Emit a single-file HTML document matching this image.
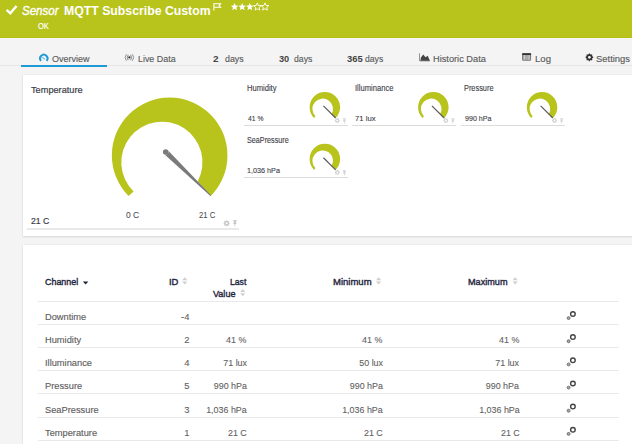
<!DOCTYPE html><html><head><meta charset="utf-8"><style>
html,body{margin:0;padding:0;width:632px;height:444px;overflow:hidden;background:#f4f4f4;font-family:"Liberation Sans",sans-serif;}
.t{position:absolute;white-space:pre;}
.abs{position:absolute;}
svg{position:absolute;left:0;top:0;overflow:visible;}
</style></head><body>
<div class="abs" style="left:0;top:0;width:632px;height:37px;background:#b8c41c"></div>
<div class="abs" style="left:0;top:37px;width:632px;height:1px;background:#b3bf12"></div>
<div class="abs" style="left:0;top:38px;width:632px;height:1px;background:#f7f7f8"></div>
<svg width="632" height="37"><path d="M6.6 9.8 L10.3 13.3 L16.5 6.0" fill="none" stroke="#fff" stroke-width="2.4" stroke-linecap="butt" stroke-linejoin="miter"/></svg>
<svg width="632" height="37"><path d="M213.9 10.4 V3.7 H220.6 L219.1 5.5 L220.6 7.3 H213.9" fill="none" stroke="#fff" stroke-width="1.1"/></svg>
<svg width="632" height="37"><polygon points="234.60,2.90 235.66,5.44 238.40,5.66 236.31,7.46 236.95,10.14 234.60,8.70 232.25,10.14 232.89,7.46 230.80,5.66 233.54,5.44" fill="#fff"/><polygon points="242.20,2.90 243.26,5.44 246.00,5.66 243.91,7.46 244.55,10.14 242.20,8.70 239.85,10.14 240.49,7.46 238.40,5.66 241.14,5.44" fill="#fff"/><polygon points="249.80,2.90 250.86,5.44 253.60,5.66 251.51,7.46 252.15,10.14 249.80,8.70 247.45,10.14 248.09,7.46 246.00,5.66 248.74,5.44" fill="#fff"/><polygon points="257.40,2.90 258.46,5.44 261.20,5.66 259.11,7.46 259.75,10.14 257.40,8.70 255.05,10.14 255.69,7.46 253.60,5.66 256.34,5.44" fill="none" stroke="#fff" stroke-width="0.9"/><polygon points="265.00,2.90 266.06,5.44 268.80,5.66 266.71,7.46 267.35,10.14 265.00,8.70 262.65,10.14 263.29,7.46 261.20,5.66 263.94,5.44" fill="none" stroke="#fff" stroke-width="0.9"/></svg>
<div class="abs" style="left:0;top:65px;width:632px;height:1px;background:#e6e6e6"></div>
<div class="abs" style="left:21px;top:64.6px;width:86px;height:2px;background:#1e9ad6"></div>
<svg width="632" height="70">
<path d="M40.97 60.78 A3.7 3.7 0 1 1 46.63 60.78" fill="none" stroke="#1e9ad6" stroke-width="1.9"/>
<path d="M42.3 57.1 L44.8 59.3" stroke="#5ab4e2" stroke-width="1.1"/>
<circle cx="129.4" cy="57.4" r="1.15" fill="#333"/>
<path d="M128.2 54.8 Q126.2 57.5 128.2 60.2 M130.6 54.8 Q132.6 57.5 130.6 60.2" fill="none" stroke="#777" stroke-width="0.9"/>
<path d="M126.4 54.2 Q123.8 57.5 126.4 60.8 M132.4 54.2 Q135.0 57.5 132.4 60.8" fill="none" stroke="#888" stroke-width="0.9"/>
<path d="M419.5 53.4 V60.9 H430" fill="none" stroke="#888" stroke-width="0.9"/>
<path d="M420.4 60.8 L420.9 57.6 L423.3 54.6 L425.5 57.2 L427.7 55.7 L429.9 60.8 Z" fill="#444"/>
<rect x="522.1" y="53.3" width="9" height="7.5" fill="#777" rx="1"/>
<rect x="522.1" y="53.3" width="9" height="1.8" fill="#333" rx="0.6"/>
<rect x="523.1" y="55.1" width="7" height="4.7" fill="#aaa"/>
<rect x="524.0" y="55.1" width="1" height="4.7" fill="#ccc"/>
<rect x="528.6" y="55.1" width="1" height="4.7" fill="#ccc"/>
<polygon points="592.36,56.58 593.27,56.80 593.27,57.80 592.36,58.02 592.00,58.88 592.49,59.68 591.78,60.39 590.98,59.90 590.12,60.26 589.90,61.17 588.90,61.17 588.68,60.26 587.82,59.90 587.02,60.39 586.31,59.68 586.80,58.88 586.44,58.02 585.53,57.80 585.53,56.80 586.44,56.58 586.80,55.72 586.31,54.92 587.02,54.21 587.82,54.70 588.68,54.34 588.90,53.43 589.90,53.43 590.12,54.34 590.98,54.70 591.78,54.21 592.49,54.92 592.00,55.72" fill="#333"/><circle cx="589.4" cy="57.3" r="2.89" fill="#333"/><circle cx="589.4" cy="57.3" r="1.40" fill="#f4f4f4"/>
</svg>
<div class="abs" style="left:23px;top:75px;width:640px;height:161px;background:#fff;box-shadow:0 0 1.5px rgba(0,0,0,0.10),0 1px 2px rgba(0,0,0,0.10)"></div>
<svg width="632" height="240">
<path d="M128.6 196 A57.8 57.8 0 1 1 210.7 196 L197.8 181.2 A40.6 40.6 0 1 0 133.6 191.4 Z" fill="#b8c41c"/>
<path d="M163.78 153.87 L210.39 195.92 L211.01 195.28 L167.62 149.93 A2.75 2.75 0 0 1 163.78 153.87 Z" fill="#7a7a7a"/><circle cx="165.7" cy="151.9" r="2.75" fill="#7a7a7a"/>
</svg>
<div class="abs" style="left:27px;top:228px;width:212px;height:2px;background:#e9e9e9"></div>
<svg width="632" height="240"><polygon points="228.95,222.73 229.67,222.90 229.67,223.70 228.95,223.87 228.66,224.56 229.06,225.19 228.49,225.76 227.86,225.36 227.17,225.65 227.00,226.37 226.20,226.37 226.03,225.65 225.34,225.36 224.71,225.76 224.14,225.19 224.54,224.56 224.25,223.87 223.53,223.70 223.53,222.90 224.25,222.73 224.54,222.04 224.14,221.41 224.71,220.84 225.34,221.24 226.03,220.95 226.20,220.23 227.00,220.23 227.17,220.95 227.86,221.24 228.49,220.84 229.06,221.41 228.66,222.04" fill="#c8c8c8"/><circle cx="226.6" cy="223.3" r="2.30" fill="#c8c8c8"/><circle cx="226.6" cy="223.3" r="1.05" fill="#fff"/><g transform="translate(232.6 220.2) scale(1.0)"><rect x="0.3" y="0" width="4" height="0.9" fill="#c8c8c8"/><path d="M1.1 0.9 L1.2 2.8 L0.2 3.8 H4.4 L3.4 2.8 L3.5 0.9 Z" fill="#c8c8c8"/><rect x="1.85" y="3.8" width="0.9" height="2.4" fill="#c8c8c8"/></g></svg>
<div class="abs" style="left:243.80px;top:125.10px;width:104px;height:1px;background:#dcdcdc"></div>
<svg width="632" height="240"><path d="M314.07 117.98 A15.25 15.25 0 1 1 335.63 117.98 L331.62 114.05 A10.3 10.3 0 1 0 315.42 116.18 Z" fill="#b8c41c"/><path d="M323.45 105.90 L335.63 117.98" stroke="#5a5a5a" stroke-width="1.2"/><polygon points="339.20,120.04 339.78,120.18 339.78,120.82 339.20,120.96 338.96,121.52 339.28,122.02 338.82,122.48 338.32,122.16 337.76,122.40 337.62,122.98 336.98,122.98 336.84,122.40 336.28,122.16 335.78,122.48 335.32,122.02 335.64,121.52 335.40,120.96 334.82,120.82 334.82,120.18 335.40,120.04 335.64,119.48 335.32,118.98 335.78,118.52 336.28,118.84 336.84,118.60 336.98,118.02 337.62,118.02 337.76,118.60 338.32,118.84 338.82,118.52 339.28,118.98 338.96,119.48" fill="#cfcfcf"/><circle cx="337.3" cy="120.5" r="1.85" fill="#cfcfcf"/><circle cx="337.3" cy="120.5" r="1.00" fill="#fff"/><g transform="translate(342.5 118.4) scale(0.82)"><rect x="0.3" y="0" width="4" height="0.9" fill="#cfcfcf"/><path d="M1.1 0.9 L1.2 2.8 L0.2 3.8 H4.4 L3.4 2.8 L3.5 0.9 Z" fill="#cfcfcf"/><rect x="1.85" y="3.8" width="0.9" height="2.4" fill="#cfcfcf"/></g></svg>
<div class="abs" style="left:352.30px;top:125.10px;width:104px;height:1px;background:#dcdcdc"></div>
<svg width="632" height="240"><path d="M422.57 117.98 A15.25 15.25 0 1 1 444.13 117.98 L440.12 114.05 A10.3 10.3 0 1 0 423.92 116.18 Z" fill="#b8c41c"/><path d="M431.95 105.90 L444.13 117.98" stroke="#5a5a5a" stroke-width="1.2"/><polygon points="447.70,120.04 448.28,120.18 448.28,120.82 447.70,120.96 447.46,121.52 447.78,122.02 447.32,122.48 446.82,122.16 446.26,122.40 446.12,122.98 445.48,122.98 445.34,122.40 444.78,122.16 444.28,122.48 443.82,122.02 444.14,121.52 443.90,120.96 443.32,120.82 443.32,120.18 443.90,120.04 444.14,119.48 443.82,118.98 444.28,118.52 444.78,118.84 445.34,118.60 445.48,118.02 446.12,118.02 446.26,118.60 446.82,118.84 447.32,118.52 447.78,118.98 447.46,119.48" fill="#cfcfcf"/><circle cx="445.8" cy="120.5" r="1.85" fill="#cfcfcf"/><circle cx="445.8" cy="120.5" r="1.00" fill="#fff"/><g transform="translate(451.0 118.4) scale(0.82)"><rect x="0.3" y="0" width="4" height="0.9" fill="#cfcfcf"/><path d="M1.1 0.9 L1.2 2.8 L0.2 3.8 H4.4 L3.4 2.8 L3.5 0.9 Z" fill="#cfcfcf"/><rect x="1.85" y="3.8" width="0.9" height="2.4" fill="#cfcfcf"/></g></svg>
<div class="abs" style="left:461.00px;top:125.10px;width:104px;height:1px;background:#dcdcdc"></div>
<svg width="632" height="240"><path d="M531.27 117.98 A15.25 15.25 0 1 1 552.83 117.98 L548.82 114.05 A10.3 10.3 0 1 0 532.62 116.18 Z" fill="#b8c41c"/><path d="M540.65 105.90 L552.83 117.98" stroke="#5a5a5a" stroke-width="1.2"/><polygon points="556.40,120.04 556.98,120.18 556.98,120.82 556.40,120.96 556.16,121.52 556.48,122.02 556.02,122.48 555.52,122.16 554.96,122.40 554.82,122.98 554.18,122.98 554.04,122.40 553.48,122.16 552.98,122.48 552.52,122.02 552.84,121.52 552.60,120.96 552.02,120.82 552.02,120.18 552.60,120.04 552.84,119.48 552.52,118.98 552.98,118.52 553.48,118.84 554.04,118.60 554.18,118.02 554.82,118.02 554.96,118.60 555.52,118.84 556.02,118.52 556.48,118.98 556.16,119.48" fill="#cfcfcf"/><circle cx="554.5" cy="120.5" r="1.85" fill="#cfcfcf"/><circle cx="554.5" cy="120.5" r="1.00" fill="#fff"/><g transform="translate(559.7 118.4) scale(0.82)"><rect x="0.3" y="0" width="4" height="0.9" fill="#cfcfcf"/><path d="M1.1 0.9 L1.2 2.8 L0.2 3.8 H4.4 L3.4 2.8 L3.5 0.9 Z" fill="#cfcfcf"/><rect x="1.85" y="3.8" width="0.9" height="2.4" fill="#cfcfcf"/></g></svg>
<div class="abs" style="left:243.80px;top:177.00px;width:104px;height:1px;background:#dcdcdc"></div>
<svg width="632" height="240"><path d="M314.07 169.88 A15.25 15.25 0 1 1 335.63 169.88 L331.62 165.95 A10.3 10.3 0 1 0 315.42 168.08 Z" fill="#b8c41c"/><path d="M323.45 157.80 L335.63 169.88" stroke="#5a5a5a" stroke-width="1.2"/><polygon points="339.20,171.94 339.78,172.08 339.78,172.72 339.20,172.86 338.96,173.42 339.28,173.92 338.82,174.38 338.32,174.06 337.76,174.30 337.62,174.88 336.98,174.88 336.84,174.30 336.28,174.06 335.78,174.38 335.32,173.92 335.64,173.42 335.40,172.86 334.82,172.72 334.82,172.08 335.40,171.94 335.64,171.38 335.32,170.88 335.78,170.42 336.28,170.74 336.84,170.50 336.98,169.92 337.62,169.92 337.76,170.50 338.32,170.74 338.82,170.42 339.28,170.88 338.96,171.38" fill="#cfcfcf"/><circle cx="337.3" cy="172.4" r="1.85" fill="#cfcfcf"/><circle cx="337.3" cy="172.4" r="1.00" fill="#fff"/><g transform="translate(342.5 170.3) scale(0.82)"><rect x="0.3" y="0" width="4" height="0.9" fill="#cfcfcf"/><path d="M1.1 0.9 L1.2 2.8 L0.2 3.8 H4.4 L3.4 2.8 L3.5 0.9 Z" fill="#cfcfcf"/><rect x="1.85" y="3.8" width="0.9" height="2.4" fill="#cfcfcf"/></g></svg>
<div class="abs" style="left:23px;top:245px;width:640px;height:260px;background:#fff;box-shadow:0 0 1.5px rgba(0,0,0,0.10),0 1px 2px rgba(0,0,0,0.10)"></div>
<svg width="632" height="444"><path d="M82.8 281.4 H88.4 L85.6 284.6 Z" fill="#1f2640"/></svg>
<svg width="632" height="444"><path d="M182.2 280.3 L184.79999999999998 277.2 L187.39999999999998 280.3 Z M182.2 281.4 L184.79999999999998 284.5 L187.39999999999998 281.4 Z" fill="#cfcfcf"/><path d="M240.2 292.1 L242.79999999999998 289 L245.39999999999998 292.1 Z M240.2 293.2 L242.79999999999998 296.3 L245.39999999999998 293.2 Z" fill="#cfcfcf"/><path d="M376 280.3 L378.6 277.2 L381.2 280.3 Z M376 281.4 L378.6 284.5 L381.2 281.4 Z" fill="#cfcfcf"/><path d="M512.6 280.3 L515.2 277.2 L517.8000000000001 280.3 Z M512.6 281.4 L515.2 284.5 L517.8000000000001 281.4 Z" fill="#cfcfcf"/></svg>
<div class="abs" style="left:38px;top:300.70px;width:581px;height:1px;background:#e9e9e9"></div>
<div class="abs" style="left:38px;top:323.80px;width:581px;height:1px;background:#e9e9e9"></div>
<div class="abs" style="left:38px;top:347.00px;width:581px;height:1px;background:#e9e9e9"></div>
<div class="abs" style="left:38px;top:370.20px;width:581px;height:1px;background:#e9e9e9"></div>
<div class="abs" style="left:38px;top:393.30px;width:581px;height:1px;background:#e9e9e9"></div>
<div class="abs" style="left:38px;top:416.50px;width:581px;height:1px;background:#e9e9e9"></div>
<div class="abs" style="left:38px;top:439.70px;width:581px;height:1px;background:#e9e9e9"></div>
<svg width="632" height="444"><circle cx="572.9" cy="314.00" r="2.3" fill="none" stroke="#444" stroke-width="1.4"/><circle cx="568.6" cy="318.10" r="1.45" fill="#aaa" stroke="#666" stroke-width="0.9"/><circle cx="572.9" cy="337.10" r="2.3" fill="none" stroke="#444" stroke-width="1.4"/><circle cx="568.6" cy="341.20" r="1.45" fill="#aaa" stroke="#666" stroke-width="0.9"/><circle cx="572.9" cy="360.30" r="2.3" fill="none" stroke="#444" stroke-width="1.4"/><circle cx="568.6" cy="364.40" r="1.45" fill="#aaa" stroke="#666" stroke-width="0.9"/><circle cx="572.9" cy="383.50" r="2.3" fill="none" stroke="#444" stroke-width="1.4"/><circle cx="568.6" cy="387.60" r="1.45" fill="#aaa" stroke="#666" stroke-width="0.9"/><circle cx="572.9" cy="406.60" r="2.3" fill="none" stroke="#444" stroke-width="1.4"/><circle cx="568.6" cy="410.70" r="1.45" fill="#aaa" stroke="#666" stroke-width="0.9"/><circle cx="572.9" cy="429.80" r="2.3" fill="none" stroke="#444" stroke-width="1.4"/><circle cx="568.6" cy="433.90" r="1.45" fill="#aaa" stroke="#666" stroke-width="0.9"/></svg>
<div class="t" style="left:22.00px;top:5.04px;font-size:12px;line-height:12px;color:#fff;font-weight:normal;font-style:italic;transform:scaleX(0.9615);transform-origin:0 50%;-webkit-text-stroke:0.35px #fff;">Sensor</div>
<div class="t" style="left:63.78px;top:5.04px;font-size:12px;line-height:12px;color:#fff;font-weight:bold;font-style:normal;transform:scaleX(1.0225);transform-origin:0 50%;">MQTT Subscribe Custom</div>
<div class="t" style="left:38.30px;top:22.37px;font-size:8.3px;line-height:8.3px;color:#fff;font-weight:normal;font-style:normal;transform:scaleX(0.8917);transform-origin:0 50%;-webkit-text-stroke:0.2px #fff;">OK</div>
<div class="t" style="left:52.20px;top:53.94px;font-size:9.4px;line-height:9.4px;color:#5c5c5c;font-weight:normal;font-style:normal;transform:scaleX(0.9590);transform-origin:0 50%;-webkit-text-stroke:0.15px #5c5c5c;">Overview</div>
<div class="t" style="left:137.65px;top:53.94px;font-size:9.4px;line-height:9.4px;color:#5c5c5c;font-weight:normal;font-style:normal;transform:scaleX(0.9487);transform-origin:0 50%;-webkit-text-stroke:0.15px #5c5c5c;">Live Data</div>
<div class="t" style="left:213.30px;top:53.52px;font-size:9.9px;line-height:9.9px;color:#444;font-weight:bold;font-style:normal;transform:scaleX(1.0200);transform-origin:0 50%;">2</div>
<div class="t" style="left:225.20px;top:53.94px;font-size:9.4px;line-height:9.4px;color:#5c5c5c;font-weight:normal;font-style:normal;transform:scaleX(0.9400);transform-origin:0 50%;-webkit-text-stroke:0.15px #5c5c5c;">days</div>
<div class="t" style="left:279.00px;top:53.52px;font-size:9.9px;line-height:9.9px;color:#444;font-weight:bold;font-style:normal;transform:scaleX(0.9273);transform-origin:0 50%;">30</div>
<div class="t" style="left:293.50px;top:53.94px;font-size:9.4px;line-height:9.4px;color:#5c5c5c;font-weight:normal;font-style:normal;transform:scaleX(0.9250);transform-origin:0 50%;-webkit-text-stroke:0.15px #5c5c5c;">days</div>
<div class="t" style="left:346.60px;top:53.52px;font-size:9.9px;line-height:9.9px;color:#444;font-weight:bold;font-style:normal;transform:scaleX(0.9500);transform-origin:0 50%;">365</div>
<div class="t" style="left:365.20px;top:53.94px;font-size:9.4px;line-height:9.4px;color:#5c5c5c;font-weight:normal;font-style:normal;transform:scaleX(0.9200);transform-origin:0 50%;-webkit-text-stroke:0.15px #5c5c5c;">days</div>
<div class="t" style="left:433.22px;top:53.94px;font-size:9.4px;line-height:9.4px;color:#5c5c5c;font-weight:normal;font-style:normal;transform:scaleX(0.9849);transform-origin:0 50%;-webkit-text-stroke:0.15px #5c5c5c;">Historic Data</div>
<div class="t" style="left:534.68px;top:53.94px;font-size:9.4px;line-height:9.4px;color:#5c5c5c;font-weight:normal;font-style:normal;transform:scaleX(1.0214);transform-origin:0 50%;-webkit-text-stroke:0.15px #5c5c5c;">Log</div>
<div class="t" style="left:596.39px;top:53.94px;font-size:9.4px;line-height:9.4px;color:#5c5c5c;font-weight:normal;font-style:normal;transform:scaleX(1.0061);transform-origin:0 50%;-webkit-text-stroke:0.15px #5c5c5c;">Settings</div>
<div class="t" style="left:30.80px;top:84.87px;font-size:9.6px;line-height:9.6px;color:#3d4048;font-weight:normal;font-style:normal;transform:scaleX(0.9593);transform-origin:0 50%;-webkit-text-stroke:0.2px #3d4048;">Temperature</div>
<div class="t" style="left:126.00px;top:212.06px;font-size:8.2px;line-height:8.2px;color:#4a4a50;font-weight:normal;font-style:normal;transform:scaleX(1.0333);transform-origin:0 50%;-webkit-text-stroke:0.05px #4a4a50;">0 C</div>
<div class="t" style="left:198.70px;top:212.06px;font-size:8.2px;line-height:8.2px;color:#4a4a50;font-weight:normal;font-style:normal;transform:scaleX(0.9412);transform-origin:0 50%;-webkit-text-stroke:0.05px #4a4a50;">21 C</div>
<div class="t" style="left:30.80px;top:216.24px;font-size:9.4px;line-height:9.4px;color:#3d4048;font-weight:normal;font-style:normal;transform:scaleX(0.9250);transform-origin:0 50%;-webkit-text-stroke:0.2px #3d4048;">21 C</div>
<div class="t" style="left:246.97px;top:84.96px;font-size:8.2px;line-height:8.2px;color:#3d4048;font-weight:normal;font-style:normal;transform:scaleX(0.9258);transform-origin:0 50%;-webkit-text-stroke:0.12px #3d4048;">Humidity</div>
<div class="t" style="left:247.60px;top:115.34px;font-size:8.1px;line-height:8.1px;color:#3d4048;font-weight:normal;font-style:normal;transform:scaleX(0.8333);transform-origin:0 50%;-webkit-text-stroke:0.12px #3d4048;">41 %</div>
<div class="t" style="left:355.47px;top:84.96px;font-size:8.2px;line-height:8.2px;color:#3d4048;font-weight:normal;font-style:normal;transform:scaleX(0.9275);transform-origin:0 50%;-webkit-text-stroke:0.12px #3d4048;">Illuminance</div>
<div class="t" style="left:355.15px;top:115.34px;font-size:8.1px;line-height:8.1px;color:#3d4048;font-weight:normal;font-style:normal;transform:scaleX(0.9500);transform-origin:0 50%;-webkit-text-stroke:0.12px #3d4048;">71 lux</div>
<div class="t" style="left:464.20px;top:84.96px;font-size:8.2px;line-height:8.2px;color:#3d4048;font-weight:normal;font-style:normal;transform:scaleX(0.9000);transform-origin:0 50%;-webkit-text-stroke:0.12px #3d4048;">Pressure</div>
<div class="t" style="left:464.80px;top:115.34px;font-size:8.1px;line-height:8.1px;color:#3d4048;font-weight:normal;font-style:normal;transform:scaleX(0.8767);transform-origin:0 50%;-webkit-text-stroke:0.12px #3d4048;">990 hPa</div>
<div class="t" style="left:247.02px;top:136.86px;font-size:8.2px;line-height:8.2px;color:#3d4048;font-weight:normal;font-style:normal;transform:scaleX(0.8804);transform-origin:0 50%;-webkit-text-stroke:0.12px #3d4048;">SeaPressure</div>
<div class="t" style="left:246.71px;top:167.24px;font-size:8.1px;line-height:8.1px;color:#3d4048;font-weight:normal;font-style:normal;transform:scaleX(0.8917);transform-origin:0 50%;-webkit-text-stroke:0.12px #3d4048;">1,036 hPa</div>
<div class="t" style="left:45.00px;top:278.21px;font-size:9.2px;line-height:9.2px;color:#1f2640;font-weight:normal;font-style:normal;transform:scaleX(0.9706);transform-origin:0 50%;-webkit-text-stroke:0.38px #1f2640;">Channel</div>
<div class="t" style="left:168.67px;top:278.21px;font-size:9.2px;line-height:9.2px;color:#1f2640;font-weight:normal;font-style:normal;transform:scaleX(1.0250);transform-origin:0 50%;-webkit-text-stroke:0.38px #1f2640;">ID</div>
<div class="t" style="left:229.70px;top:278.21px;font-size:9.2px;line-height:9.2px;color:#1f2640;font-weight:normal;font-style:normal;transform:scaleX(0.9389);transform-origin:0 50%;-webkit-text-stroke:0.38px #1f2640;">Last</div>
<div class="t" style="left:213.00px;top:289.91px;font-size:9.2px;line-height:9.2px;color:#1f2640;font-weight:normal;font-style:normal;transform:scaleX(0.9826);transform-origin:0 50%;-webkit-text-stroke:0.38px #1f2640;">Value</div>
<div class="t" style="left:333.00px;top:278.21px;font-size:9.2px;line-height:9.2px;color:#1f2640;font-weight:normal;font-style:normal;transform:scaleX(1.0351);transform-origin:0 50%;-webkit-text-stroke:0.38px #1f2640;">Minimum</div>
<div class="t" style="left:467.90px;top:278.21px;font-size:9.2px;line-height:9.2px;color:#1f2640;font-weight:normal;font-style:normal;transform:scaleX(0.9925);transform-origin:0 50%;-webkit-text-stroke:0.38px #1f2640;">Maximum</div>
<div class="t" style="left:45.00px;top:311.94px;font-size:9.4px;line-height:9.4px;color:#5f5f5f;font-weight:normal;font-style:normal;transform:scaleX(0.99);transform-origin:0 50%;-webkit-text-stroke:0.15px #5f5f5f;">Downtime</div>
<div class="t" style="right:442.60px;top:311.94px;font-size:9.4px;line-height:9.4px;color:#5f5f5f;font-weight:normal;font-style:normal;-webkit-text-stroke:0.1px #5f5f5f;">-4</div>
<div class="t" style="left:45.00px;top:335.04px;font-size:9.4px;line-height:9.4px;color:#5f5f5f;font-weight:normal;font-style:normal;transform:scaleX(0.99);transform-origin:0 50%;-webkit-text-stroke:0.15px #5f5f5f;">Humidity</div>
<div class="t" style="right:442.60px;top:335.04px;font-size:9.4px;line-height:9.4px;color:#5f5f5f;font-weight:normal;font-style:normal;-webkit-text-stroke:0.1px #5f5f5f;">2</div>
<div class="t" style="right:385.40px;top:335.04px;font-size:9.4px;line-height:9.4px;color:#5f5f5f;font-weight:normal;font-style:normal;transform:scaleX(0.95);transform-origin:100% 50%;-webkit-text-stroke:0.1px #5f5f5f;">41 %</div>
<div class="t" style="right:249.30px;top:335.04px;font-size:9.4px;line-height:9.4px;color:#5f5f5f;font-weight:normal;font-style:normal;transform:scaleX(0.95);transform-origin:100% 50%;-webkit-text-stroke:0.1px #5f5f5f;">41 %</div>
<div class="t" style="right:112.60px;top:335.04px;font-size:9.4px;line-height:9.4px;color:#5f5f5f;font-weight:normal;font-style:normal;transform:scaleX(0.95);transform-origin:100% 50%;-webkit-text-stroke:0.1px #5f5f5f;">41 %</div>
<div class="t" style="left:45.00px;top:358.24px;font-size:9.4px;line-height:9.4px;color:#5f5f5f;font-weight:normal;font-style:normal;transform:scaleX(0.99);transform-origin:0 50%;-webkit-text-stroke:0.15px #5f5f5f;">Illuminance</div>
<div class="t" style="right:442.60px;top:358.24px;font-size:9.4px;line-height:9.4px;color:#5f5f5f;font-weight:normal;font-style:normal;-webkit-text-stroke:0.1px #5f5f5f;">4</div>
<div class="t" style="right:385.40px;top:358.24px;font-size:9.4px;line-height:9.4px;color:#5f5f5f;font-weight:normal;font-style:normal;transform:scaleX(0.95);transform-origin:100% 50%;-webkit-text-stroke:0.1px #5f5f5f;">71 lux</div>
<div class="t" style="right:249.30px;top:358.24px;font-size:9.4px;line-height:9.4px;color:#5f5f5f;font-weight:normal;font-style:normal;transform:scaleX(0.95);transform-origin:100% 50%;-webkit-text-stroke:0.1px #5f5f5f;">50 lux</div>
<div class="t" style="right:112.60px;top:358.24px;font-size:9.4px;line-height:9.4px;color:#5f5f5f;font-weight:normal;font-style:normal;transform:scaleX(0.95);transform-origin:100% 50%;-webkit-text-stroke:0.1px #5f5f5f;">71 lux</div>
<div class="t" style="left:45.00px;top:381.44px;font-size:9.4px;line-height:9.4px;color:#5f5f5f;font-weight:normal;font-style:normal;transform:scaleX(0.99);transform-origin:0 50%;-webkit-text-stroke:0.15px #5f5f5f;">Pressure</div>
<div class="t" style="right:442.60px;top:381.44px;font-size:9.4px;line-height:9.4px;color:#5f5f5f;font-weight:normal;font-style:normal;-webkit-text-stroke:0.1px #5f5f5f;">5</div>
<div class="t" style="right:385.40px;top:381.44px;font-size:9.4px;line-height:9.4px;color:#5f5f5f;font-weight:normal;font-style:normal;transform:scaleX(0.95);transform-origin:100% 50%;-webkit-text-stroke:0.1px #5f5f5f;">990 hPa</div>
<div class="t" style="right:249.30px;top:381.44px;font-size:9.4px;line-height:9.4px;color:#5f5f5f;font-weight:normal;font-style:normal;transform:scaleX(0.95);transform-origin:100% 50%;-webkit-text-stroke:0.1px #5f5f5f;">990 hPa</div>
<div class="t" style="right:112.60px;top:381.44px;font-size:9.4px;line-height:9.4px;color:#5f5f5f;font-weight:normal;font-style:normal;transform:scaleX(0.95);transform-origin:100% 50%;-webkit-text-stroke:0.1px #5f5f5f;">990 hPa</div>
<div class="t" style="left:45.00px;top:404.54px;font-size:9.4px;line-height:9.4px;color:#5f5f5f;font-weight:normal;font-style:normal;transform:scaleX(0.99);transform-origin:0 50%;-webkit-text-stroke:0.15px #5f5f5f;">SeaPressure</div>
<div class="t" style="right:442.60px;top:404.54px;font-size:9.4px;line-height:9.4px;color:#5f5f5f;font-weight:normal;font-style:normal;-webkit-text-stroke:0.1px #5f5f5f;">3</div>
<div class="t" style="right:385.40px;top:404.54px;font-size:9.4px;line-height:9.4px;color:#5f5f5f;font-weight:normal;font-style:normal;transform:scaleX(0.95);transform-origin:100% 50%;-webkit-text-stroke:0.1px #5f5f5f;">1,036 hPa</div>
<div class="t" style="right:249.30px;top:404.54px;font-size:9.4px;line-height:9.4px;color:#5f5f5f;font-weight:normal;font-style:normal;transform:scaleX(0.95);transform-origin:100% 50%;-webkit-text-stroke:0.1px #5f5f5f;">1,036 hPa</div>
<div class="t" style="right:112.60px;top:404.54px;font-size:9.4px;line-height:9.4px;color:#5f5f5f;font-weight:normal;font-style:normal;transform:scaleX(0.95);transform-origin:100% 50%;-webkit-text-stroke:0.1px #5f5f5f;">1,036 hPa</div>
<div class="t" style="left:45.00px;top:427.74px;font-size:9.4px;line-height:9.4px;color:#5f5f5f;font-weight:normal;font-style:normal;transform:scaleX(0.99);transform-origin:0 50%;-webkit-text-stroke:0.15px #5f5f5f;">Temperature</div>
<div class="t" style="right:442.60px;top:427.74px;font-size:9.4px;line-height:9.4px;color:#5f5f5f;font-weight:normal;font-style:normal;-webkit-text-stroke:0.1px #5f5f5f;">1</div>
<div class="t" style="right:385.40px;top:427.74px;font-size:9.4px;line-height:9.4px;color:#5f5f5f;font-weight:normal;font-style:normal;transform:scaleX(0.95);transform-origin:100% 50%;-webkit-text-stroke:0.1px #5f5f5f;">21 C</div>
<div class="t" style="right:249.30px;top:427.74px;font-size:9.4px;line-height:9.4px;color:#5f5f5f;font-weight:normal;font-style:normal;transform:scaleX(0.95);transform-origin:100% 50%;-webkit-text-stroke:0.1px #5f5f5f;">21 C</div>
<div class="t" style="right:112.60px;top:427.74px;font-size:9.4px;line-height:9.4px;color:#5f5f5f;font-weight:normal;font-style:normal;transform:scaleX(0.95);transform-origin:100% 50%;-webkit-text-stroke:0.1px #5f5f5f;">21 C</div>
</body></html>
